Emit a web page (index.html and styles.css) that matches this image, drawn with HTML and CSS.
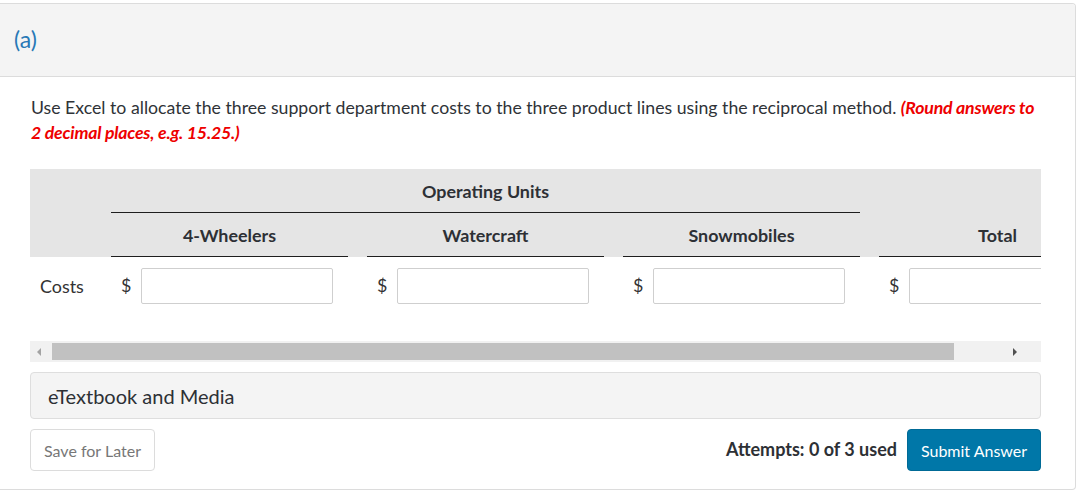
FILE: index.html
```html
<!DOCTYPE html>
<html lang="en">
<head>
<meta charset="utf-8">
<title>Question (a)</title>
<link rel="stylesheet" href="styles.css">
</head>
<body>
<div class="card">
  <div class="card-head"><span class="part">(a)</span></div>
  <div class="card-body">
    <p class="prompt">Use Excel to allocate the three support department costs to the three product lines using the reciprocal method. <em class="note">(Round answers to 2 decimal places, e.g. 15.25.)</em></p>

    <div class="scroller">
      <div class="tbl">
        <div class="thead">
          <div class="row">
            <div class="cell"></div>
            <div class="cell th span3 rule">Operating Units</div>
            <div class="cell"></div>
          </div>
          <div class="row">
            <div class="cell"></div>
            <div class="cell th rule">4-Wheelers</div>
            <div class="cell th rule">Watercraft</div>
            <div class="cell th rule">Snowmobiles</div>
            <div class="cell th rule">Total</div>
          </div>
        </div>
        <div class="row body-row">
          <div class="cell label">Costs</div>
          <div class="cell money"><span class="dollar">$</span><input class="inp" type="text"></div>
          <div class="cell money"><span class="dollar">$</span><input class="inp" type="text"></div>
          <div class="cell money"><span class="dollar">$</span><input class="inp" type="text"></div>
          <div class="cell money"><span class="dollar">$</span><input class="inp" type="text"></div>
        </div>
      </div>
    </div>
    <div class="hscroll">
      <span class="arrow arrow-left"></span>
      <span class="thumb"></span>
      <span class="arrow arrow-right"></span>
    </div>

    <div class="media">eTextbook and Media</div>

    <div class="actions">
      <button class="btn btn-save" type="button">Save for Later</button>
      <div class="right">
        <span class="attempts">Attempts: 0 of 3 used</span>
        <button class="btn btn-submit" type="button">Submit Answer</button>
      </div>
    </div>
  </div>
</div>
</body>
</html>
```

FILE: styles.css
```css
* { box-sizing: border-box; }
html, body { margin: 0; padding: 0; background: #fff; }
body {
  font-family: Lato, "Open Sans", "Liberation Sans", sans-serif;
  color: #333;
  padding-top: 3px;
}
.card {
  width: 1076px;
  border: 1px solid #dcdcdc;
  border-left: none;
  border-radius: 0 4px 4px 0;
  overflow: hidden;
}
.card-head {
  height: 73px;
  background: #f4f4f4;
  border-bottom: 1px solid #dcdcdc;
  display: flex;
  align-items: center;
  padding-left: 14px;
  padding-bottom: 2px;
}
.part {
  font-size: 23px;
  color: #2878b6;
}
.card-body {
  padding: 18px 34px 18px 30px;
}
.prompt {
  margin: 0;
  font-size: 17.7px;
  line-height: 25px;
  padding-left: 1px;
  color: #2f3338;
}
.note {
  color: #ee0000;
  font-weight: bold;
  font-style: italic;
  letter-spacing: -0.2px;
}
.scroller {
  margin-top: 24px;
  width: 1011px;
  overflow: hidden;
}
.tbl {
  width: 1086px;
}
.row {
  display: grid;
  grid-template-columns: 62px repeat(4, 237px);
  column-gap: 19px;
}
.thead {
  background: #e5e5e5;
}
.thead .row { height: 44px; }
.span3 { grid-column: span 3; }
.th {
  font-weight: bold;
  font-size: 17.9px;
  display: flex;
  align-items: center;
  justify-content: center;
  color: #2d3035;
}
.rule { border-bottom: 1px solid #1e1e1e; }
.body-row {
  height: 84px;
  padding-top: 11px;
  align-items: start;
}
.label {
  font-size: 17.9px;
  padding-left: 10px;
  line-height: 36px;
  white-space: nowrap;
}
.money {
  display: flex;
  align-items: center;
  height: 36px;
}
.dollar {
  width: 30px;
  padding-left: 10px;
  font-size: 17.9px;
  padding-bottom: 3px;
}
.inp {
  width: 192px;
  height: 36px;
  border: 1px solid #cfcfcf;
  border-radius: 2px;
  background: #fff;
  margin: 0;
  padding: 0 6px;
  font: inherit;
}
.hscroll {
  width: 1011px;
  height: 21px;
  background: #f1f1f1;
  display: flex;
  align-items: center;
}
.thumb {
  display: block;
  margin-left: 11px;
  width: 902px;
  height: 17px;
  background: #c1c1c1;
}
.arrow {
  width: 0;
  height: 0;
  border-top: 4px solid transparent;
  border-bottom: 4px solid transparent;
}
.arrow-left {
  margin-left: 7px;
  border-right: 4px solid #a3a3a3;
}
.arrow-right {
  margin-left: auto;
  margin-right: 24px;
  border-left: 4px solid #505050;
}
.media {
  margin-top: 10px;
  height: 47px;
  background: #f4f4f4;
  border: 1px solid #dedede;
  border-radius: 4px;
  font-size: 20px;
  display: flex;
  align-items: center;
  padding-left: 17px;
  color: #2d3035;
}
.actions {
  margin-top: 10px;
  display: flex;
  justify-content: space-between;
  align-items: center;
}
.right {
  display: flex;
  align-items: center;
  gap: 10px;
}
.btn {
  font-family: Lato, "Open Sans", "Liberation Sans", sans-serif;
  font-size: 16px;
  height: 42px;
  border-radius: 4px;
  cursor: pointer;
  margin: 0;
  padding: 0;
}
.btn-save {
  width: 125px;
  background: #fff;
  border: 1px solid #dcdcdc;
  color: #777;
}
.btn-submit {
  width: 134px;
  background: #0077a8;
  border: 1px solid #006a96;
  color: #fff;
}
.attempts {
  font-weight: bold;
  font-size: 18px;
  color: #2d3035;
  padding-bottom: 2px;
}
```
